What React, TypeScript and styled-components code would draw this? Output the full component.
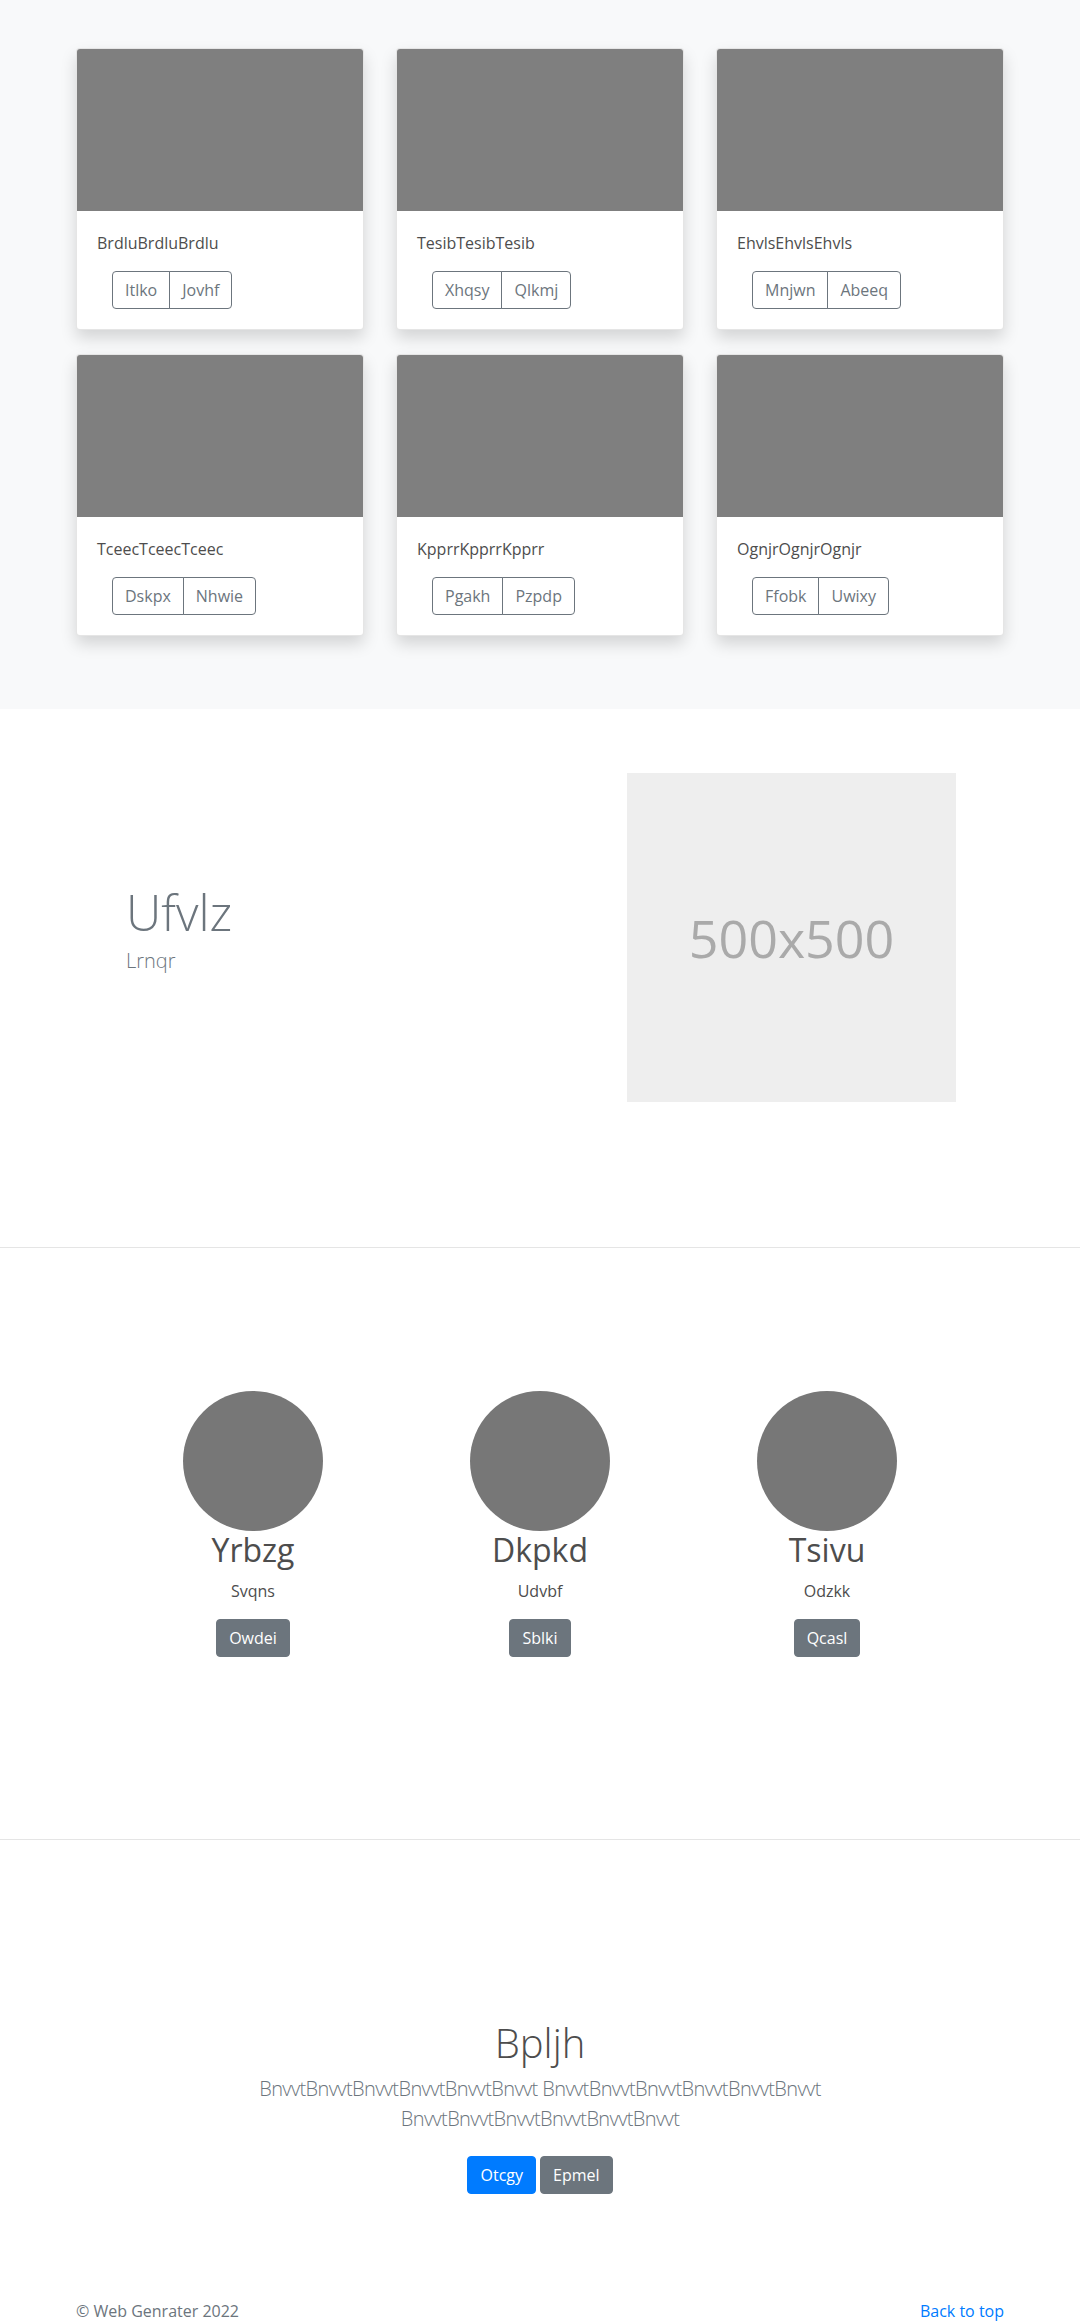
import React from 'react';
import styled, { createGlobalStyle } from 'styled-components';

const GlobalStyle = createGlobalStyle`
  * { box-sizing: border-box; }
  body {
    margin: 0;
    font-family: "Open Sans", "Noto Sans", sans-serif;
    font-size: 16px;
    line-height: 1.5;
    color: #4d4d4d;
    background: #fff;
  }
`;

const Album = styled.section`
  background: #f8f9fa;
  padding: 48px 0 73px;
`;

const CardGrid = styled.div`
  width: 928px;
  margin: 0 auto;
  display: grid;
  grid-template-columns: repeat(3, 288px);
  column-gap: 32px;
  row-gap: 24px;
`;

const Card = styled.div`
  background: #fff;
  border: 1px solid rgba(0, 0, 0, 0.1);
  border-radius: 4px;
  box-shadow: 0 8px 16px rgba(0, 0, 0, 0.15);
  overflow: hidden;
`;

const Thumb = styled.div`
  height: 162px;
  background: #7f7f7f;
`;

const CardBody = styled.div`
  padding: 20px;
`;

const CardText = styled.p`
  margin: 0 0 16px;
  color: #4d4d4d;
`;

const BtnGroup = styled.div`
  display: inline-flex;
  margin-left: 15px;
`;

const OutlineBtn = styled.button`
  font-family: inherit;
  font-size: 16px;
  line-height: 24px;
  padding: 6px 12px;
  color: #6c757d;
  background: transparent;
  border: 1px solid #6c757d;
  border-radius: 0;
  &:first-child { border-radius: 4px 0 0 4px; }
  &:last-child { border-radius: 0 4px 4px 0; margin-left: -1px; }
`;

const Hero = styled.section`
  width: 960px;
  margin: 0 auto;
  padding: 64px 0 145px;
  display: grid;
  grid-template-columns: 480px 480px;
  align-items: center;
`;

const HeroText = styled.div`
  padding-left: 66px;
`;

const HeroTitle = styled.h1`
  margin: 0 0 5px;
  font-size: 49px;
  font-weight: 300;
  line-height: 1.2;
  color: #6c757d;
`;

const HeroLead = styled.p`
  margin: 0 0 16px;
  font-size: 20px;
  font-weight: 300;
  line-height: 30px;
  color: #6c757d;
`;

const Placeholder = styled.div`
  width: 329px;
  height: 329px;
  margin-left: 87px;
  background: #eee;
  color: #aaa;
  font-size: 52px;
  display: flex;
  align-items: center;
  justify-content: center;
`;

const Rule = styled.hr`
  margin: 0;
  border: 0;
  border-top: 1px solid #e5e5e5;
`;

const Team = styled.section`
  padding: 143px 0 182px;
  display: grid;
  grid-template-columns: repeat(3, 287px);
  justify-content: center;
  text-align: center;
`;

const Member = styled.div`
  display: flex;
  flex-direction: column;
  align-items: center;
`;

const Avatar = styled.div`
  width: 140px;
  height: 140px;
  border-radius: 50%;
  background: #777;
`;

const MemberName = styled.h2`
  margin: 0 0 10px;
  font-size: 32px;
  font-weight: 400;
  line-height: 1.2;
  color: #4d4d4d;
`;

const MemberRole = styled.p`
  margin: 0 0 16px;
  color: #4d4d4d;
`;

const SolidBtn = styled.button<{ $variant: 'primary' | 'secondary' }>`
  font-family: inherit;
  font-size: 16px;
  line-height: 24px;
  padding: 6px 12px;
  color: #fff;
  border: 1px solid ${({ $variant }) => ($variant === 'primary' ? '#007bff' : '#6c757d')};
  background: ${({ $variant }) => ($variant === 'primary' ? '#007bff' : '#6c757d')};
  border-radius: 4px;
`;

const Jumbo = styled.section`
  padding: 179px 0 57px;
  text-align: center;
`;

const JumboTitle = styled.h1`
  margin: 0 0 7px;
  font-size: 40px;
  font-weight: 300;
  line-height: 1.2;
  color: #4d4d4d;
`;

const JumboLead = styled.p`
  max-width: 700px;
  margin: 0 auto 22px;
  font-size: 20px;
  font-weight: 300;
  line-height: 30px;
  letter-spacing: -0.6px;
  color: #6c757d;
`;

const Actions = styled.div`
  display: flex;
  justify-content: center;
  gap: 4px;
`;

const Footer = styled.footer`
  width: 928px;
  margin: 0 auto;
  padding: 48px 0;
  display: flex;
  justify-content: space-between;
  color: #6c757d;
`;

const TopLink = styled.a`
  color: #007bff;
  text-decoration: none;
`;

const cards = [
  { title: 'BrdluBrdluBrdlu', actions: ['Itlko', 'Jovhf'] },
  { title: 'TesibTesibTesib', actions: ['Xhqsy', 'Qlkmj'] },
  { title: 'EhvlsEhvlsEhvls', actions: ['Mnjwn', 'Abeeq'] },
  { title: 'TceecTceecTceec', actions: ['Dskpx', 'Nhwie'] },
  { title: 'KpprrKpprrKpprr', actions: ['Pgakh', 'Pzpdp'] },
  { title: 'OgnjrOgnjrOgnjr', actions: ['Ffobk', 'Uwixy'] },
];

const members = [
  { name: 'Yrbzg', role: 'Svqns', cta: 'Owdei' },
  { name: 'Dkpkd', role: 'Udvbf', cta: 'Sblki' },
  { name: 'Tsivu', role: 'Odzkk', cta: 'Qcasl' },
];

const word = 'Bnvvt'.repeat(6);

export default function App() {
  return (
    <>
      <GlobalStyle />
      <Album>
        <CardGrid>
          {cards.map((c) => (
            <Card key={c.title}>
              <Thumb />
              <CardBody>
                <CardText>{c.title}</CardText>
                <BtnGroup>
                  {c.actions.map((a) => (
                    <OutlineBtn key={a}>{a}</OutlineBtn>
                  ))}
                </BtnGroup>
              </CardBody>
            </Card>
          ))}
        </CardGrid>
      </Album>

      <Hero>
        <HeroText>
          <HeroTitle>Ufvlz</HeroTitle>
          <HeroLead>Lrnqr</HeroLead>
        </HeroText>
        <Placeholder>500x500</Placeholder>
      </Hero>

      <Rule />

      <Team>
        {members.map((m) => (
          <Member key={m.name}>
            <Avatar />
            <MemberName>{m.name}</MemberName>
            <MemberRole>{m.role}</MemberRole>
            <SolidBtn $variant="secondary">{m.cta}</SolidBtn>
          </Member>
        ))}
      </Team>

      <Rule />

      <Jumbo>
        <JumboTitle>Bpljh</JumboTitle>
        <JumboLead>{`${word} ${word} ${word}`}</JumboLead>
        <Actions>
          <SolidBtn $variant="primary">Otcgy</SolidBtn>
          <SolidBtn $variant="secondary">Epmel</SolidBtn>
        </Actions>
      </Jumbo>

      <Footer>
        <span>© Web Genrater 2022</span>
        <TopLink href="#">Back to top</TopLink>
      </Footer>
    </>
  );
}
